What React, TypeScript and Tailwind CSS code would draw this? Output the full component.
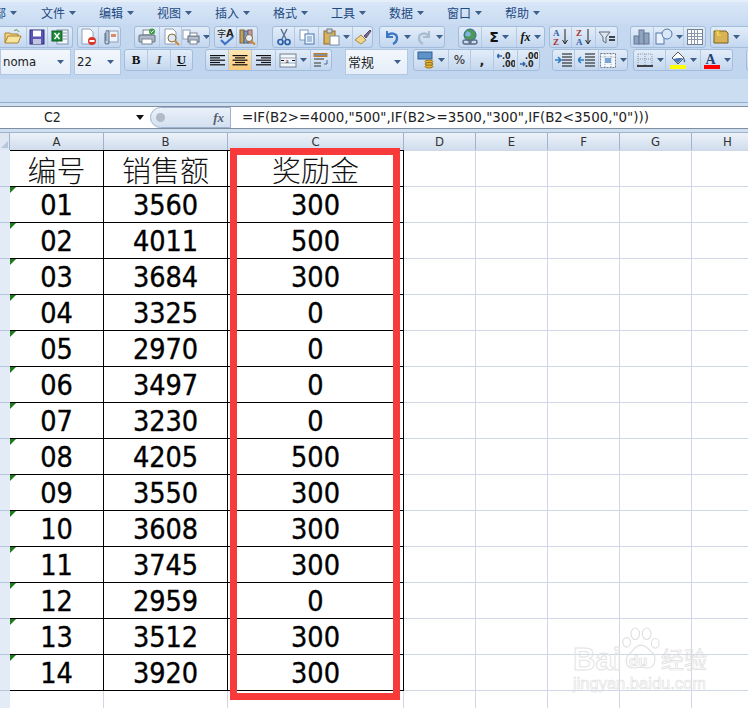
import React from "react";

const cjk = '"Noto Sans CJK SC", sans-serif';
const ui = '"DejaVu Sans", sans-serif';

type P = { children?: React.ReactNode; w?: number };
const S = ({ children, w = 18 }: P) => (
  <svg width={w} height={18} viewBox={`0 0 ${w} 18`} className="block shrink-0">{children}</svg>
);
const Arrow = () => <svg width={7} height={4} viewBox="0 0 7 4" className="block shrink-0"><path d="M0 0h7L3.5 4z" fill="#3e5f8a" /></svg>;

const Open = () => <S><path d="M1 15V5h5l1 1h7v2" fill="#f2d57c" stroke="#a98232" /><path d="M1 15l3-7h13l-3 7z" fill="#f8e49c" stroke="#a98232" /><path d="M10 3c2-2 4-1 5 1" fill="none" stroke="#3b8a3b" /></S>;
const Save = () => <S><rect x="2" y="2" width="14" height="14" fill="#5b55b5" stroke="#2d2a78" /><rect x="5" y="2.5" width="8" height="6" fill="#fff" /><rect x="5" y="11" width="8" height="5" fill="#c4c6dd" /></S>;
const Xl = () => <S><rect x="6" y="2" width="11" height="14" fill="#f4f7fb" stroke="#7e93ad" /><path d="M12 5h4M12 8h4M12 11h4" stroke="#8da0b8" /><rect x="1" y="3" width="10" height="10" fill="#1f8a3c" stroke="#0c5a22" /><path d="M3.5 5l5 6M8.5 5l-5 6" stroke="#fff" strokeWidth="1.4" /></S>;
const Doc = ({ children }: P) => <S><path d="M3 1h8l3 3v12H3z" fill="#fff" stroke="#8da0b8" />{children}</S>;
const PageStop = () => <Doc><circle cx="13" cy="13" r="4" fill="#d9352b" /><rect x="10.5" y="12" width="5" height="2" fill="#fff" /></Doc>;
const Clip = () => <S><rect x="7" y="3" width="10" height="11" fill="#eef3f9" stroke="#8da0b8" /><rect x="10" y="6" width="5" height="3" fill="#d98a6a" /><path d="M4 5v9a2 2 0 004 0V4a1.5 1.5 0 00-3 0v9" fill="none" stroke="#6c7f98" strokeWidth="1.2" /></S>;
const Printer = () => <S><rect x="5" y="2" width="8" height="5" fill="#fff" stroke="#7a8798" /><rect x="1" y="7" width="16" height="7" rx="1" fill="#aeb8c6" stroke="#5e6b7c" /><rect x="4" y="11" width="10" height="5" fill="#fff" stroke="#7a8798" /><circle cx="14" cy="3.5" r="3" fill="#3f9a4a" /><path d="M12.5 3.5l1 1 2-2" stroke="#fff" fill="none" /></S>;
const Preview = () => <Doc><circle cx="10" cy="10" r="4" fill="#dce9f6" stroke="#8a6b3a" /><path d="M13 13l4 4" stroke="#c98a2c" strokeWidth="2" /></Doc>;
const PrintSmall = () => <S><rect x="1" y="2" width="7" height="9" fill="#fff" stroke="#8da0b8" /><rect x="6" y="8" width="11" height="6" fill="#b4bdc9" stroke="#5e6b7c" /><rect x="8" y="5" width="7" height="3" fill="#fff" stroke="#7a8798" /><rect x="8" y="12" width="7" height="4" fill="#fff" stroke="#7a8798" /></S>;
const Spell = () => <S><text x="0" y="9" fontSize="9" fontFamily={cjk} fill="#222">字</text><text x="9" y="9" fontSize="10" fontFamily={ui} fontWeight="700" fill="#222">A</text><path d="M4 12l4 4 8-7" stroke="#3d74c4" strokeWidth="2.2" fill="none" /></S>;
const Research = () => <S><rect x="2" y="2" width="4" height="13" fill="#c7a15a" stroke="#7d6330" /><rect x="6" y="3" width="4" height="12" fill="#7f9cc4" stroke="#4c658a" /><rect x="10" y="2" width="4" height="13" fill="#c9a1a0" stroke="#80605f" /><circle cx="11" cy="10" r="3.5" fill="#e7f0f9" stroke="#8a6b3a" /><path d="M13 13l4 3.5" stroke="#c98a2c" strokeWidth="2" /></S>;
const Cut = () => <S><path d="M6 1l5 10M12 1L7 11" stroke="#55708f" strokeWidth="1.4" /><circle cx="5.5" cy="14" r="2.5" fill="none" stroke="#2a5fa8" strokeWidth="1.7" /><circle cx="12.5" cy="14" r="2.5" fill="none" stroke="#2a5fa8" strokeWidth="1.7" /></S>;
const Copy = () => <S><rect x="2" y="2" width="8" height="10" fill="#fff" stroke="#7e9cc4" /><rect x="7" y="6" width="9" height="10" fill="#eaf2fb" stroke="#4a76b0" /><path d="M9 9h5M9 11h5M9 13h5" stroke="#6d8fbd" /></S>;
const Paste = () => <S><rect x="2" y="3" width="11" height="13" fill="#d9b25a" stroke="#8a6a24" /><rect x="5" y="1" width="5" height="4" fill="#d0d4da" stroke="#6f7680" /><rect x="8" y="8" width="9" height="9" fill="#fff" stroke="#7a8da6" /></S>;
const Brush = () => <S><path d="M1 12l6-5 5 5-5 4z" fill="#f0d68a" stroke="#a58a45" /><path d="M10 8l6-6 1 1-5 7z" fill="#7d6a8f" stroke="#54466a" /></S>;
const Undo = () => <S><path d="M4 3v6h6" fill="none" stroke="#3f78c2" strokeWidth="2" /><path d="M4 8c3-4 10-3 10 2 0 3-2 5-4 6" fill="none" stroke="#3f78c2" strokeWidth="2.4" /></S>;
const Redo = () => <S><path d="M14 3v6H8" fill="none" stroke="#aabccf" strokeWidth="2" /><path d="M14 8c-3-4-10-3-10 2 0 3 2 5 4 6" fill="none" stroke="#aabccf" strokeWidth="2.4" /></S>;
const Globe = () => <S><circle cx="9" cy="7" r="6" fill="#4d9a56" stroke="#2e6b9b" /><path d="M6 3c3 1 5 3 3 5-2 1-4 0-5-1" fill="#7fb4e2" /><rect x="2" y="12" width="8" height="4" rx="2" fill="none" stroke="#5c6f86" strokeWidth="1.4" /><rect x="8" y="12" width="8" height="4" rx="2" fill="none" stroke="#5c6f86" strokeWidth="1.4" /></S>;
const SortA = () => <S><text x="1" y="8" fontSize="9" fontWeight="700" fontFamily='"Liberation Serif", serif' fill="#2f5da8">A</text><text x="1" y="17" fontSize="9" fontWeight="700" fontFamily='"Liberation Serif", serif' fill="#a8322f">Z</text><path d="M13 1v14M10.5 12l2.5 4 2.5-4" stroke="#222" fill="none" /></S>;
const SortZ = () => <S><text x="1" y="8" fontSize="9" fontWeight="700" fontFamily='"Liberation Serif", serif' fill="#a8322f">Z</text><text x="1" y="17" fontSize="9" fontWeight="700" fontFamily='"Liberation Serif", serif' fill="#2f5da8">A</text><path d="M13 1v14M10.5 12l2.5 4 2.5-4" stroke="#222" fill="none" /></S>;
const Filter = () => <S><path d="M1 4h11L8 9v6l-3-2V9z" fill="#dfe5ec" stroke="#5d6b7b" /><path d="M11 9h6M11 12h6" stroke="#111" strokeWidth="1.6" /></S>;
const Chart = () => <S><rect x="1" y="8" width="5" height="8" fill="#8fa3bd" stroke="#65799a" /><rect x="6" y="2" width="5" height="14" fill="#8fa3bd" stroke="#65799a" /><rect x="11" y="5" width="5" height="11" fill="#8fa3bd" stroke="#65799a" /></S>;
const Shapes = () => <S><rect x="1" y="5" width="8" height="11" fill="#eaf2fb" stroke="#5178ab" /><circle cx="12" cy="6" r="5" fill="#dbe8f7" stroke="#5178ab" /></S>;
const Table = () => <S><rect x="1.5" y="1.5" width="15" height="15" fill="#fff" stroke="#6f7f93" /><path d="M1.5 5.5h15M1.5 8.5h15M1.5 11.5h15M5.5 1.5v15M8.5 1.5v15M11.5 1.5v15" stroke="#8b98aa" /></S>;
const Folder = () => <S><path d="M2 15V3h12l2 2v10z" fill="#d8b356" stroke="#7a6021" /><path d="M4 1l1 3 2-1-1 3 3 1-3 1" fill="#fff4a6" stroke="#e7c93a" /></S>;
const Lines = ({ a }: { a: "l" | "c" | "r" }) => {
  const r = [15, 10, 15, 10, 15];
  return <S>{r.map((w, i) => {
    const x = a === "l" ? 2 : a === "c" ? 9 - w / 2 : 16 - w;
    return <rect key={i} x={x} y={4 + i * 2.3} width={w} height={1.2} fill="#111" />;
  })}</S>;
};
const Merge = () => <S><rect x="1" y="3" width="16" height="13" fill="#f2f6fb" stroke="#6f7f93" /><path d="M1 7h16M1 12h16" stroke="#9aa8b9" /><text x="6.5" y="12" fontSize="7" fontFamily='"Liberation Serif", serif' fill="#111">a</text><path d="M2 9.5h3M13 9.5h3" stroke="#111" /></S>;
const Wrap = () => <S><path d="M2 4h13M2 8h10M2 12h7M2 15h7" stroke="#333" strokeWidth="1.2" /><rect x="2" y="2.5" width="13" height="3" fill="none" stroke="#c07b2a" /><path d="M15 9v4h-3" stroke="#4a6f9e" fill="none" /></S>;
const Money = () => <S><rect x="1" y="1" width="14" height="7" fill="#5f92c9" stroke="#2e5f97" /><ellipse cx="12" cy="10.5" rx="4" ry="1.5" fill="#e8b537" stroke="#94701a" /><ellipse cx="12" cy="13" rx="4" ry="1.5" fill="#e8b537" stroke="#94701a" /><ellipse cx="12" cy="15.5" rx="4" ry="1.5" fill="#e8b537" stroke="#94701a" /></S>;
const Dec = ({ flip }: { flip?: boolean }) => <S><text x="5" y="8" fontSize="8" fontWeight="700" fontFamily={ui} fill="#222">{flip ? ".00" : ".0"}</text><text x="5" y="16" fontSize="8" fontWeight="700" fontFamily={ui} fill="#222">{flip ? ".0" : ".00"}</text><path d={flip ? "M0 13h5M3 11l2 2-2 2" : "M5 5H0M2 3L0 5l2 2"} stroke="#2f66b0" strokeWidth="1.4" fill="none" /></S>;
const Indent = ({ rev }: { rev?: boolean }) => <S><path d="M7 3h10M7 6h10M7 9h10M7 12h10M7 15h10" stroke="#111" /><path d={rev ? "M6 9H0M3 6L0 9l3 3" : "M0 9h6M3 6l3 3-3 3"} stroke="#2f7dc4" strokeWidth="1.6" fill="none" /></S>;
const Cond = () => <S><rect x="1.5" y="2.5" width="15" height="14" fill="#f4f7fb" stroke="#6f7f93" strokeDasharray="2 1" /><path d="M1.5 6h15M6 3v13M12 3v13" stroke="#9aa8b9" strokeDasharray="1 1" /><rect x="6" y="7" width="6" height="5" fill="#79a4d8" /></S>;
const Borders = () => <S><path d="M2 3h14M2 8h14M2 3v11M9 3v11M16 3v11" stroke="#8a97a8" strokeDasharray="1 1" /><path d="M1 15h16" stroke="#111" strokeWidth="1.6" /></S>;
const Fill = () => <S><path d="M3 7l6-6 6 6-6 6z" fill="#fff" stroke="#555" /><path d="M4 8l5-1 5 0-5 5z" fill="#4a78b5" /><path d="M15 7c1 2 2 3 1 4s-2 0-1-4" fill="#3d74c4" /><rect x="1" y="14" width="16" height="4" fill="#ffff00" /></S>;
const FontColor = () => <S><text x="2.5" y="13" fontSize="14" fontWeight="700" fontFamily='"Liberation Serif", serif' fill="#233f7a">A</text><rect x="1" y="14" width="16" height="4" fill="#ff0000" /></S>;

const Btn = ({ w, children, on, sep = true }: { w: number; children?: React.ReactNode; on?: boolean; sep?: boolean }) => (
  <div
    style={{ width: w }}
    className={`flex h-full shrink-0 items-center justify-center gap-[3px] ${sep ? "border-r border-[#b4cae4]" : ""} last:border-r-0 ${on ? "bg-gradient-to-b from-[#fde6b4] to-[#fbc878]" : ""}`}
  >
    {children}
  </div>
);
const Group = ({ ml, w, children, cut }: { ml: number; w: number; children: React.ReactNode; cut?: boolean }) => (
  <div
    style={{ marginLeft: ml, width: w }}
    className={`flex h-[22px] shrink-0 items-center overflow-hidden border border-[#a2bcdb] bg-gradient-to-b from-[#e3edf9] to-[#c4d7ef] ${cut ? "rounded-r-[3px] border-l-0" : "rounded-[3px]"}`}
  >
    {children}
  </div>
);
const Combo = ({ ml, w, t, f = ui }: { ml: number; w: number; t: string; f?: string }) => (
  <div
    style={{ marginLeft: ml, width: w, fontFamily: f, fontStretch: "condensed" }}
    className="flex h-[26px] shrink-0 items-center justify-between border border-[#b3c8e2] bg-gradient-to-b from-[#f3f7fc] to-[#e5eef9] pl-[2px] pr-[6px] text-[13px] text-[#222]"
  >
    <span className="whitespace-nowrap">{t}</span>
    <Arrow />
  </div>
);

const menus = ["部", "文件", "编辑", "视图", "插入", "格式", "工具", "数据", "窗口", "帮助"];
const cols = ["A", "B", "C", "D", "E", "F", "G", "H"];
const widths = [94, 124, 176, 72, 72, 72, 72, 72];
const head = ["编号", "销售额", "奖励金"];
const data: [string, string, string][] = [
  ["01", "3560", "300"], ["02", "4011", "500"], ["03", "3684", "300"], ["04", "3325", "0"],
  ["05", "2970", "0"], ["06", "3497", "0"], ["07", "3230", "0"], ["08", "4205", "500"],
  ["09", "3550", "300"], ["10", "3608", "300"], ["11", "3745", "300"], ["12", "2959", "0"],
  ["13", "3512", "300"], ["14", "3920", "300"],
];
const big: React.CSSProperties = { fontFamily: ui, fontStretch: "condensed" };

const RowHead = ({ h = 36 }: { h?: number }) => (
  <div style={{ height: h }} className="w-[10px] shrink-0 border-b border-[#b4c5dc] bg-[#e3ebf6]" />
);
const Empty = ({ n }: { n: number }) => (
  <>
    {widths.slice(n).map((w, i) => (
      <div key={i} style={{ width: w }} className="h-full shrink-0 border-b border-r border-[#d0d7e5]" />
    ))}
  </>
);

export default function App() {
  return (
    <div className="relative h-[708px] w-[748px] overflow-hidden bg-white" style={{ fontFamily: ui }}>
      {/* menu */}
      <div className="flex h-[24px] items-center overflow-hidden border-t-2 border-[#e6eff9] bg-gradient-to-b from-[#d9e7f7] to-[#c9dcf2]">
        <div className="ml-[-17px] flex">
          {menus.map((m) => (
            <div key={m} style={{ fontFamily: cjk }} className={`flex w-[58px] shrink-0 items-center gap-[4px] text-[12px] leading-none text-[#1e4a82] ${m === "部" ? "justify-end pr-[24px]" : "pl-0"}`}>
              <span className="whitespace-nowrap">{m}</span>
              <Arrow />
            </div>
          ))}
        </div>
      </div>
      {/* ribbon */}
      <div className="flex h-[79px] flex-col border-b border-[#8fb0d0] bg-gradient-to-b from-[#c6d9f0] via-[#c0d5ee] via-70% to-[#cbddf1] to-70%">
        <div className="flex h-[24px] items-center pt-[2px]">
          <Group ml={0} w={73} cut>
            <Btn w={27}><Open /></Btn><Btn w={21}><Save /></Btn><Btn w={24}><Xl /></Btn>
          </Group>
          <Group ml={4} w={44}><Btn w={21}><PageStop /></Btn><Btn w={21}><Clip /></Btn></Group>
          <Group ml={13} w={76}><Btn w={25}><Printer /></Btn><Btn w={22}><Preview /></Btn><Btn w={27}><PrintSmall /><Arrow /></Btn></Group>
          <Group ml={4} w={44}><Btn w={22}><Spell /></Btn><Btn w={20}><Research /></Btn></Group>
          <Group ml={14} w={101}><Btn w={22}><Cut /></Btn><Btn w={24}><Copy /></Btn><Btn w={34}><Paste /><Arrow /></Btn><Btn w={20}><Brush /></Btn></Group>
          <Group ml={6} w={66}><Btn w={33} sep={false}><Undo /><Arrow /></Btn><Btn w={31} sep={false}><Redo /><Arrow /></Btn></Group>
          <Group ml={13} w={87}><Btn w={23}><Globe /></Btn><Btn w={35}><span className="text-[14px] font-bold leading-none text-[#111]">Σ</span><Arrow /></Btn><Btn w={27}><span className="text-[12px] italic leading-none text-[#111]" style={{ fontFamily: '"Liberation Serif", serif' }}><b>fx</b></span><Arrow /></Btn></Group>
          <Group ml={4} w={69}><Btn w={22}><SortA /></Btn><Btn w={24}><SortZ /></Btn><Btn w={21}><Filter /></Btn></Group>
          <Group ml={12} w={76}><Btn w={23}><Chart /></Btn><Btn w={30}><Shapes /><Arrow /></Btn><Btn w={21}><Table /></Btn></Group>
          <Group ml={4} w={60}><Btn w={30}><Folder /><Arrow /></Btn></Group>
        </div>
        <div className="mt-[1px] flex h-[24px] items-start">
          <Combo ml={0} w={71} t="noma" />
          <Combo ml={3} w={47} t="22" />
          <Group ml={3} w={69}>
            <Btn w={23}><span className="text-[13px] font-bold text-[#111]" style={{ fontFamily: '"Liberation Serif", serif' }}>B</span></Btn>
            <Btn w={23}><span className="text-[13px] italic font-bold text-[#333]" style={{ fontFamily: '"Liberation Serif", serif' }}>I</span></Btn>
            <Btn w={21}><span className="text-[13px] font-bold text-[#111] underline" style={{ fontFamily: '"Liberation Serif", serif' }}>U</span></Btn>
          </Group>
          <Group ml={12} w={127}>
            <Btn w={23}><Lines a="l" /></Btn><Btn w={23} on><Lines a="c" /></Btn><Btn w={24}><Lines a="r" /></Btn>
            <Btn w={35}><Merge /><Arrow /></Btn><Btn w={20}><Wrap /></Btn>
          </Group>
          <Combo ml={13} w={63} t="常规" f={cjk} />
          <Group ml={5} w={127}>
            <Btn w={35}><Money /><Arrow /></Btn><Btn w={22}><span className="text-[12px] text-[#222]">%</span></Btn><Btn w={23}><span className="text-[13px] font-bold leading-none text-[#222]">,</span></Btn>
            <Btn w={24}><Dec /></Btn><Btn w={21}><Dec flip /></Btn>
          </Group>
          <Group ml={12} w={76}><Btn w={22}><Indent /></Btn><Btn w={24}><Indent rev /></Btn><Btn w={28}><Cond /><Arrow /></Btn></Group>
          <Group ml={5} w={100}><Btn w={32}><Borders /><Arrow /></Btn><Btn w={35}><Fill /><Arrow /></Btn><Btn w={31}><FontColor /><Arrow /></Btn></Group>
          <Group ml={13} w={20}><Btn w={18}></Btn></Group>
        </div>
      </div>
      {/* formula bar */}
      <div className="flex h-[29px] flex-col bg-[#d0dff0] pt-[3px]">
        <div className="flex h-[23px] border-y border-[#7f8fa3] bg-white">
          <div className="flex w-[150px] shrink-0 items-center justify-between pl-[44px] pr-[6px] text-[14px] text-[#222]" style={big}>
            <span>C2</span>
            <svg width={8} height={5} viewBox="0 0 8 5"><path d="M0 0h8L4 5z" fill="#111" /></svg>
          </div>
          <div className="flex w-[81px] shrink-0 items-center justify-between rounded-l-full border border-[#9fb3cc] bg-gradient-to-b from-[#eaf1fa] to-[#d3e0f0] pl-[5px] pr-[6px]">
            <div className="h-[9px] w-[9px] rounded-full bg-[#b1bac6]" />
            <span className="text-[13px] font-bold italic text-[#55606e]" style={{ fontFamily: '"Liberation Serif", serif' }}>fx</span>
          </div>
          <div className="flex flex-1 items-center whitespace-nowrap pl-[11px] text-[14.9px] text-[#222]" style={big}>
            =IF(B2&gt;=4000,"500",IF(B2&gt;=3500,"300",IF(B2&lt;3500,"0")))
          </div>
        </div>
      </div>
      {/* column headers */}
      <div className="flex h-[18px] border-t border-[#9fb3cc]">
        <div className="relative w-[10px] shrink-0 border-r border-[#9fb3cc] bg-[#dde6f2]">
          <svg width={7} height={7} viewBox="0 0 7 7" className="absolute bottom-[2px] right-[1px]"><path d="M7 0v7H0z" fill="#b7c6d9" /></svg>
        </div>
        {cols.map((c, i) => (
          <div key={c} style={{ width: widths[i], ...big }} className="flex shrink-0 items-center justify-center border-r border-[#9fb3cc] bg-gradient-to-b from-[#edf2f9] to-[#d0dded] text-[13px] text-[#333]">
            {c}
          </div>
        ))}
      </div>
      {/* header row */}
      <div className="flex h-[37px]">
        <RowHead h={37} />
        {head.map((t, i) => (
          <div key={t} style={{ width: widths[i], fontFamily: cjk }} className="flex shrink-0 items-center justify-center border-b border-r border-t border-black pt-[2px] text-[29px] font-light leading-none text-[#111]">
            {t}
          </div>
        ))}
        {widths.slice(3).map((w, i) => (
          <div key={i} style={{ width: w }} className="h-full shrink-0 border-b border-r border-t border-[#d0d7e5]" />
        ))}
      </div>
      {data.map((r) => (
        <div key={r[0]} className="flex h-[36px]">
          <RowHead />
          {r.map((v, i) => (
            <div key={i} style={{ width: widths[i], ...big }} className="relative flex shrink-0 items-center justify-center border-b border-r border-black pt-[4px] text-[28.5px] leading-none text-black [-webkit-text-stroke:0.35px_#000]">
              {i === 0 && <svg width={6} height={6} viewBox="0 0 6 6" className="absolute left-0 top-0"><path d="M0 0h6L0 6z" fill="#1d7a1d" /></svg>}
              {v}
            </div>
          ))}
          <Empty n={3} />
        </div>
      ))}
      <div className="flex h-[36px]">
        <RowHead />
        <Empty n={0} />
      </div>
      {/* red annotation frame */}
      <div className="absolute left-[230px] top-[148px] h-[552px] w-[170px] border-[7px] border-[#f93a3a]" />
      {/* watermark */}
      <div className="absolute left-[573px] top-[627px] h-[65px] w-[136px]">
        <div className="absolute left-0 top-[17px] text-[31px] font-bold leading-none text-transparent [-webkit-text-stroke:1px_#e4e4e4]" style={{ fontFamily: '"Liberation Sans", sans-serif' }}>Bai</div>
        <svg width={40} height={44} viewBox="0 0 42 44" className="absolute left-[47px] top-0" fill="none" stroke="#e0e0e0" strokeWidth="1.2">
          <ellipse cx="7" cy="15" rx="4" ry="5" /><ellipse cx="16" cy="6" rx="4.5" ry="6" /><ellipse cx="28" cy="6" rx="4.5" ry="6" /><ellipse cx="37" cy="16" rx="4" ry="5" />
          <path d="M22 18c6 0 8 5 12 8s4 16-5 16c-3 0-5-1-7-1s-5 1-8 1c-9 0-9-11-4-15s6-9 12-9z" />
        </svg>
        <div className="absolute left-[56px] top-[26px] text-[15px] font-bold leading-none text-transparent [-webkit-text-stroke:0.7px_#dcdcdc]" style={{ fontFamily: '"Liberation Sans", sans-serif' }}>du</div>
        <div className="absolute left-[88px] top-[20px] text-[23px] leading-none text-transparent [-webkit-text-stroke:0.7px_#dedede]" style={{ fontFamily: cjk }}>经验</div>
        <div className="absolute left-0 top-[48px] whitespace-nowrap text-[16.5px] leading-none text-transparent [-webkit-text-stroke:0.6px_#e0e0e0]" style={{ fontFamily: '"Liberation Sans", sans-serif' }}>jingyan.baidu.com</div>
      </div>
    </div>
  );
}
